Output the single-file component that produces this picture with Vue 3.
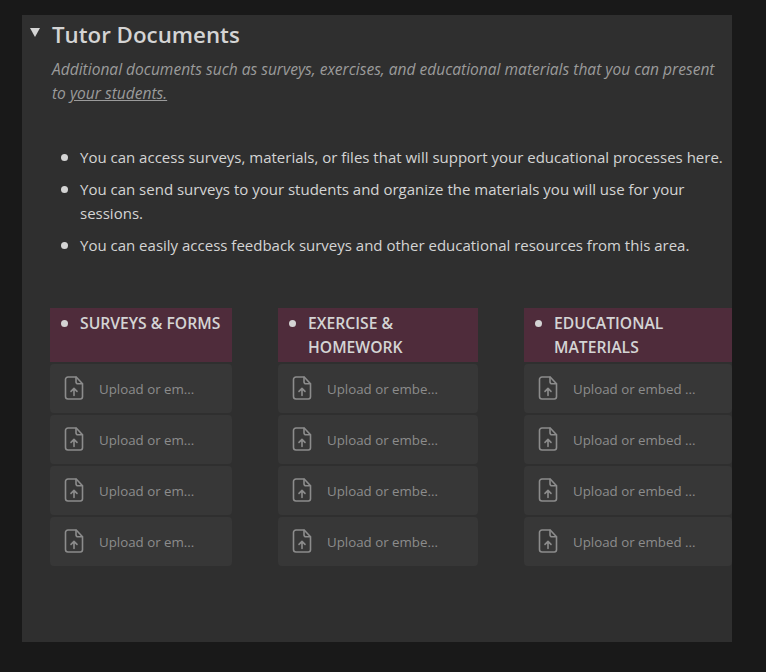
<template>
  <div class="page">
    <section class="panel">
      <header class="heading">
        <span class="caret"></span>
        <h1>Tutor Documents</h1>
      </header>
      <p class="intro">
        Additional documents such as surveys, exercises, and educational materials that you can present to
        <u>your students.</u>
      </p>
      <ul class="notes">
        <li v-for="note in notes" :key="note"><span>{{ note }}</span></li>
      </ul>
      <div class="columns">
        <div v-for="col in columns" :key="col.title" class="column">
          <ul class="col-title">
            <li><span>{{ col.title }}</span></li>
          </ul>
          <div v-for="n in 4" :key="n" class="upload">
            <svg class="file-icon" viewBox="0 0 20 24" fill="none" stroke="currentColor" stroke-width="1.6" stroke-linecap="round" stroke-linejoin="round">
              <path d="M4 1h8.2l6.3 6.8v13a2.2 2.2 0 0 1-2.2 2.2H4a2.5 2.5 0 0 1-2.5-2.5v-17A2.5 2.5 0 0 1 4 1z" />
              <path d="M12 1.2v4.6a2 2 0 0 0 2 2h4.4" />
              <path d="M10 19.5v-6.7M7 15.4l3-3 3 3" />
            </svg>
            <span class="upload-text">{{ col.label }}</span>
          </div>
        </div>
      </div>
    </section>
  </div>
</template>

<script setup>
const notes = [
  "You can access surveys, materials, or files that will support your educational processes here.",
  "You can send surveys to your students and organize the materials you will use for your sessions.",
  "You can easily access feedback surveys and other educational resources from this area.",
];

const columns = [
  { title: "SURVEYS & FORMS", label: "Upload or em..." },
  { title: "EXERCISE & HOMEWORK", label: "Upload or embe..." },
  { title: "EDUCATIONAL MATERIALS", label: "Upload or embed ..." },
];
</script>

<style scoped>
.page {
  height: 672px;
  box-sizing: border-box;
  padding: 15px 34px 30px 22px;
  background: #191919;
  font-family: "Open Sans", "Noto Sans", sans-serif;
  color: #d4d4d4;
}

.panel {
  height: 627px;
  box-sizing: border-box;
  padding-top: 3px;
  background: #2f2f2f;
  overflow: hidden;
}

.heading {
  display: flex;
  align-items: center;
  height: 32px;
  padding-left: 8px;
}

.caret {
  width: 0;
  height: 0;
  margin-right: 12px;
  margin-top: -3px;
  border-left: 5px solid transparent;
  border-right: 5px solid transparent;
  border-top: 9px solid #d4d4d4;
}

h1 {
  margin: 0;
  font-size: 22.3px;
  font-weight: 600;
  color: #d4d4d4;
}

.intro {
  margin: 7px 8px 0 30px;
  font-size: 15.55px;
  line-height: 24px;
  font-style: italic;
  color: #9b9b9b;
}

.notes {
  margin: 40px 0 0;
  padding: 0 0 0 39px;
  list-style: none;
  font-size: 15px;
  line-height: 24px;
  color: #d4d4d4;
}

.notes li,
.col-title li {
  display: flex;
}

.notes li {
  padding-bottom: 8px;
}

.notes li::before,
.col-title li::before {
  content: "";
  flex: none;
  width: 7px;
  height: 7px;
  margin: 9px 12px 0 0;
  border-radius: 50%;
  background: #d4d4d4;
}

.columns {
  display: grid;
  grid-template-columns: 182px 200px 208px;
  column-gap: 46px;
  margin: 43px 0 0 28px;
}

.column {
  min-width: 0;
}

.col-title {
  height: 54px;
  box-sizing: border-box;
  margin: 0 0 2px;
  padding: 3px 8px 0 11px;
  list-style: none;
  background: #4f2c3b;
  font-size: 15.7px;
  font-weight: 600;
  line-height: 24px;
  color: #d4d4d4;
}

.upload {
  display: flex;
  align-items: center;
  height: 49px;
  margin-bottom: 2px;
  padding: 0 0 1px 14px;
  box-sizing: border-box;
  background: #373737;
  border-radius: 4px;
  color: #8c8c8c;
}

.file-icon {
  width: 20px;
  height: 24px;
  flex: none;
  margin-right: 15px;
}

.upload-text {
  font-size: 13.3px;
  white-space: nowrap;
  padding-top: 1px;
}
</style>
